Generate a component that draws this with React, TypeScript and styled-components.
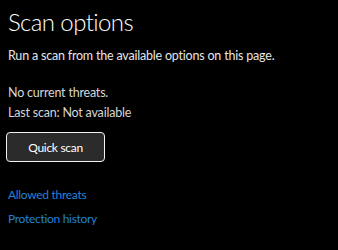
import React from 'react';
import styled, { createGlobalStyle } from 'styled-components';

const Global = createGlobalStyle`
  html, body {
    margin: 0;
    background: #000;
  }
  body {
    font-family: Lato, 'Liberation Sans', sans-serif;
  }
`;

const App = () => {
  return (
    <>
      <Global />
      <Page>
        <Title>Scan options</Title>
        <Subtitle>Run a scan from the available options on this page.</Subtitle>
        <Status>
          <StatusLine>No current threats.</StatusLine>
          <StatusLine>Last scan: Not available</StatusLine>
        </Status>
        <ScanButton>Quick scan</ScanButton>
        <Links>
          <Link href="#">Allowed threats</Link>
          <Link href="#">Protection history</Link>
        </Links>
      </Page>
    </>
  );
};

export default App;

const Page = styled.div`
  width: 338px;
  height: 250px;
  box-sizing: border-box;
  padding: 6px 8px 0 8px;
  display: flex;
  flex-direction: column;
  align-items: flex-start;
  color: #fff;
`;

const Title = styled.div`
  font-size: 24px;
  font-weight: 300;
  letter-spacing: -0.6px;
  line-height: 32px;
  color: #fff;
`;

const Subtitle = styled.div`
  font-size: 12.5px;
  letter-spacing: -0.2px;
  line-height: 18px;
  margin-top: 9px;
  color: #e6e6e6;
`;

const Status = styled.div`
  margin-top: 18px;
  display: flex;
  flex-direction: column;
`;

const StatusLine = styled.div`
  font-size: 12.5px;
  letter-spacing: -0.2px;
  line-height: 20px;
  color: #d6d6d6;
`;

const ScanButton = styled.button`
  margin-top: 9px;
  margin-left: -2px;
  width: 99px;
  height: 30px;
  box-sizing: border-box;
  border: 1.5px solid #f2f2f2;
  border-radius: 4px;
  background: #2b2b2b;
  color: #fff;
  font-family: inherit;
  font-size: 12px;
  letter-spacing: -0.3px;
  padding: 0;
`;

const Links = styled.div`
  margin-top: 24px;
  display: flex;
  flex-direction: column;
  gap: 7px;
`;

const Link = styled.a`
  font-size: 12px;
  letter-spacing: -0.3px;
  line-height: 17px;
  color: #2282d8;
  text-decoration: none;
`;
